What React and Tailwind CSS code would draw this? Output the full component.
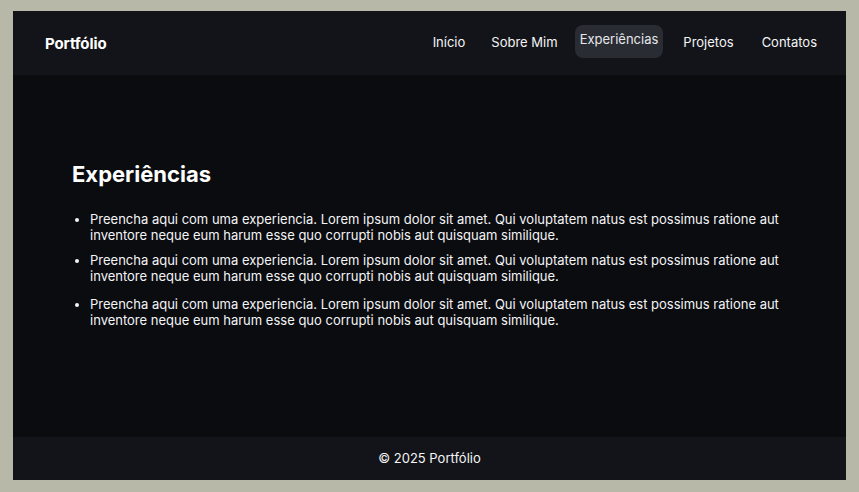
import React from 'react';

const navItems = [
  { label: 'Início', ml: 'ml-0' },
  { label: 'Sobre Mim', ml: 'ml-[16px]' },
  { label: 'Experiências', ml: 'ml-[12px]' },
  { label: 'Projetos', ml: 'ml-[15px]' },
  { label: 'Contatos', ml: 'ml-[18px]' },
];
const active = 'Experiências';

const experiencias = [
  'Preencha aqui com uma experiencia. Lorem ipsum dolor sit amet. Qui voluptatem natus est possimus ratione aut inventore neque eum harum esse quo corrupti nobis aut quisquam similique.',
  'Preencha aqui com uma experiencia. Lorem ipsum dolor sit amet. Qui voluptatem natus est possimus ratione aut inventore neque eum harum esse quo corrupti nobis aut quisquam similique.',
  'Preencha aqui com uma experiencia. Lorem ipsum dolor sit amet. Qui voluptatem natus est possimus ratione aut inventore neque eum harum esse quo corrupti nobis aut quisquam similique.',
];

const App = () => {
  return (
    <div className="min-h-screen bg-[#b8b8a8] pt-[11px] pl-[13px] pr-[13px] pb-[12px] font-['Inter',sans-serif]">
      <div className="h-[469px] flex flex-col bg-[#0b0c10] text-white">
        {/* Header */}
        <header className="h-[64px] shrink-0 bg-[#131419] flex items-center justify-between pl-[32px] pr-[24px]">
          <span className="text-[15px] font-bold tracking-[-0.1px] pt-[2px]">Portfólio</span>
          <nav className="flex items-center">
            {navItems.map(({ label, ml }) => (
              <a
                key={label}
                href="#"
                className={
                  label === active
                    ? `${ml} px-[5px] h-[33px] -mt-[4px] flex items-center pb-[3px] rounded-lg bg-[#2a2c33] text-[13px] text-gray-200`
                    : `${ml} px-[5px] h-[33px] flex items-center text-[13px] text-gray-100`
                }
              >
                {label}
              </a>
            ))}
          </nav>
        </header>

        {/* Experiências */}
        <main className="flex-1 pt-[85px] pl-[59px]">
          <h2 className="text-[22px] font-bold leading-[28px]">Experiências</h2>
          <ul className="mt-[23px] pl-[18px] list-disc w-[720px] text-[13px] leading-[16px] text-gray-100">
            <li>{experiencias[0]}</li>
            <li className="mt-[9px]">{experiencias[1]}</li>
            <li className="mt-[12px]">{experiencias[2]}</li>
          </ul>
        </main>

        {/* Footer */}
        <footer className="h-[43px] shrink-0 bg-[#131419] flex items-center justify-center pt-[1px]">
          <span className="text-[13px] text-gray-100">© 2025 Portfólio</span>
        </footer>
      </div>
    </div>
  );
};

export default App;
